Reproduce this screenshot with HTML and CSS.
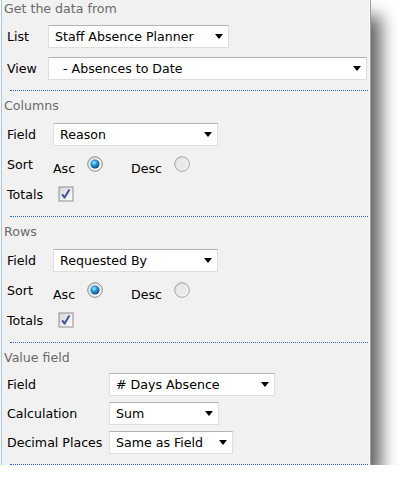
FILE: index.html
```html
<!DOCTYPE html>
<html lang="en">
<head>
    <meta charset="UTF-8">
    <meta name="viewport" content="width=device-width, initial-scale=1.0">
    <title>Pivot settings</title>
    <link rel="stylesheet" href="styles.css">
</head>
<body>

<!-- shared gradients for the radio and checkbox glyphs -->
<svg class="defs" width="0" height="0" aria-hidden="true">
    <defs>
        <linearGradient id="ringFill" x1="0" y1="0" x2="1" y2="1">
            <stop offset="0" stop-color="#d8d8d8"/>
            <stop offset="1" stop-color="#ffffff"/>
        </linearGradient>
        <radialGradient id="dotFill" cx="0.4" cy="0.35" r="0.7">
            <stop offset="0" stop-color="#b9ecff"/>
            <stop offset="0.35" stop-color="#2ea6e0"/>
            <stop offset="1" stop-color="#0b3f7a"/>
        </radialGradient>
        <linearGradient id="boxFill" x1="0" y1="0" x2="1" y2="1">
            <stop offset="0" stop-color="#d6d6d6"/>
            <stop offset="1" stop-color="#ffffff"/>
        </linearGradient>
    </defs>
</svg>

<div class="panel">

    <!-- source list -->
    <div class="heading heading-first">Get the data from</div>
    <div class="row row-tall">
        <label class="lbl lbl-narrow" for="srcList">List</label>
        <span class="dropdown w-list">
            <select id="srcList"><option>Staff Absence Planner</option></select>
        </span>
    </div>
    <div class="row row-tall">
        <label class="lbl lbl-narrow" for="srcView">View</label>
        <span class="dropdown w-view">
            <select id="srcView"><option>&nbsp;&nbsp;- Absences to Date</option></select>
        </span>
    </div>
    <div class="sep sep-first"></div>

    <!-- columns -->
    <div class="heading">Columns</div>
    <div class="row row-first">
        <label class="lbl" for="colField">Field</label>
        <span class="dropdown w-field">
            <select id="colField"><option>Reason</option></select>
        </span>
    </div>
    <div class="row">
        <span class="lbl">Sort</span>
        <span class="opt">
            <span class="opt-text">Asc</span>
            <svg class="radio" width="16" height="16" viewBox="0 0 16 16"><circle cx="8" cy="8" r="7.3" fill="url(#ringFill)" stroke="#8c8c8c"/><circle cx="8" cy="8" r="4.5" fill="url(#dotFill)"/></svg>
        </span>
        <span class="opt opt-desc">
            <span class="opt-text">Desc</span>
            <svg class="radio" width="16" height="16" viewBox="0 0 16 16"><circle cx="8" cy="8" r="7.3" fill="url(#ringFill)" stroke="#a2a2a2"/><circle cx="8" cy="8" r="5.2" fill="#e9e9e9"/></svg>
        </span>
    </div>
    <div class="row">
        <span class="lbl lbl-totals">Totals</span>
        <svg class="check" width="16" height="16" viewBox="0 0 16 16"><rect x="0.5" y="0.5" width="15" height="15" fill="#8f8f8f"/><rect x="1.5" y="1.5" width="13" height="13" fill="url(#boxFill)"/><path d="M4.2 8.4 L6.6 11.6 L11.4 3.6" fill="none" stroke="#3f52a3" stroke-width="2" stroke-linejoin="round"/></svg>
    </div>
    <div class="sep"></div>

    <!-- rows -->
    <div class="heading">Rows</div>
    <div class="row row-first">
        <label class="lbl" for="rowField">Field</label>
        <span class="dropdown w-field">
            <select id="rowField"><option>Requested By</option></select>
        </span>
    </div>
    <div class="row">
        <span class="lbl">Sort</span>
        <span class="opt">
            <span class="opt-text">Asc</span>
            <svg class="radio" width="16" height="16" viewBox="0 0 16 16"><circle cx="8" cy="8" r="7.3" fill="url(#ringFill)" stroke="#8c8c8c"/><circle cx="8" cy="8" r="4.5" fill="url(#dotFill)"/></svg>
        </span>
        <span class="opt opt-desc">
            <span class="opt-text">Desc</span>
            <svg class="radio" width="16" height="16" viewBox="0 0 16 16"><circle cx="8" cy="8" r="7.3" fill="url(#ringFill)" stroke="#a2a2a2"/><circle cx="8" cy="8" r="5.2" fill="#e9e9e9"/></svg>
        </span>
    </div>
    <div class="row">
        <span class="lbl lbl-totals">Totals</span>
        <svg class="check" width="16" height="16" viewBox="0 0 16 16"><rect x="0.5" y="0.5" width="15" height="15" fill="#8f8f8f"/><rect x="1.5" y="1.5" width="13" height="13" fill="url(#boxFill)"/><path d="M4.2 8.4 L6.6 11.6 L11.4 3.6" fill="none" stroke="#3f52a3" stroke-width="2" stroke-linejoin="round"/></svg>
    </div>
    <div class="sep"></div>

    <!-- value field -->
    <div class="heading">Value field</div>
    <div class="row row-value row-value-first">
        <label class="lbl lbl-wide" for="valField">Field</label>
        <span class="dropdown w-value">
            <select id="valField"><option># Days Absence</option></select>
        </span>
    </div>
    <div class="row row-value">
        <label class="lbl lbl-wide" for="valCalc">Calculation</label>
        <span class="dropdown w-calc">
            <select id="valCalc"><option>Sum</option></select>
        </span>
    </div>
    <div class="row row-value">
        <label class="lbl lbl-wide" for="valDec">Decimal Places</label>
        <span class="dropdown w-dec">
            <select id="valDec"><option>Same as Field</option></select>
        </span>
    </div>
    <div class="sep"></div>

</div>

</body>
</html>
```

FILE: styles.css
```css
body {
    margin: 0;
    font-family: "DejaVu Sans", Verdana, sans-serif;
    font-size: 12.6px;
    color: #000;
    background-color: #fff;
}
.defs {
    position: absolute;
}
.panel {
    width: 368px;
    margin-left: 1px;
    background-color: #f1f1f1;
    border-left: 1px solid #a9c5ec;
    border-right: 1px solid #9b9b9b;
    box-shadow: inset -1px 0 #ffffff, 12px 14px 16px -2px rgba(0, 0, 0, 0.62);
}

/* section headings */
.heading {
    height: 18px;
    line-height: 18px;
    margin-top: 6px;
    padding-left: 2px;
    color: #6a6a6a;
}
.heading-first {
    margin-top: 0;
    height: 20px;
}

/* dotted separators */
.sep {
    border-top: 1px dotted #2f62d9;
    margin: 7px 2px 0 8px;
}
.sep-first {
    margin-top: 6px;
}

/* form rows */
.row {
    display: flex;
    align-items: center;
    height: 30px;
    padding-left: 5px;
}
.row-tall {
    height: 32px;
}
.row-first {
    margin-top: 4px;
}
.row-value {
    height: 29px;
}
.row-value-first {
    margin-top: 3px;
}
.lbl {
    width: 46px;
    flex: none;
}
.lbl-narrow {
    width: 41px;
}
.lbl-wide {
    width: 102px;
}
.lbl-totals {
    width: 51px;
}

/* dropdowns */
.dropdown {
    position: relative;
    display: block;
    height: 23px;
}
.dropdown select {
    appearance: none;
    -webkit-appearance: none;
    width: 100%;
    height: 23px;
    margin: 0;
    padding: 0 20px 0 6px;
    font-family: "DejaVu Sans", Verdana, sans-serif;
    font-size: 12.6px;
    color: #000;
    background-color: #fff;
    border: 1px solid #dedede;
    border-top-color: #b3b3b3;
    border-radius: 0;
    box-sizing: border-box;
    outline: none;
}
.dropdown::after {
    content: "";
    position: absolute;
    right: 6px;
    top: 9px;
    border-left: 4px solid transparent;
    border-right: 4px solid transparent;
    border-top: 5px solid #000;
    pointer-events: none;
}
.w-list { width: 181px; }
.w-view { width: 319px; }
.w-field { width: 165px; }
.w-value { width: 166px; }
.w-calc { width: 110px; }
.w-dec { width: 124px; }

/* radio options */
.opt {
    display: inline-flex;
    align-items: center;
}
.opt-text {
    padding-top: 8px;
    margin-right: 12px;
}
.opt-desc {
    margin-left: 28px;
}
.radio, .check {
    display: block;
    flex: none;
}
```
